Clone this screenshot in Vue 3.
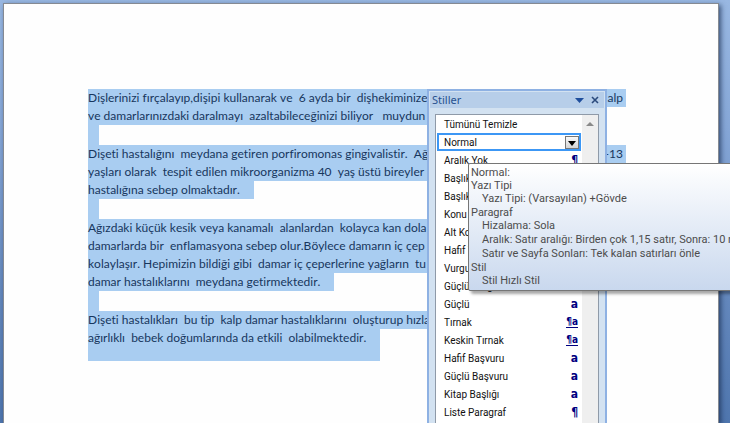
<template>
  <main class="desk">
    <article class="paper">
      <p v-for="(lines, i) in paragraphs" :key="i" class="paragraph">
        <span v-for="line in lines" :key="line.text" class="line" :class="line.kind">
          <span>{{ line.text }}</span>
          <span v-if="line.tail">{{ line.tail }}</span>
        </span>
      </p>
      <div class="watermark">www.dijitalders.com</div>
    </article>

    <aside class="pane" aria-labelledby="pane-title">
      <header class="pane-head">
        <h2 id="pane-title" class="pane-title">Stiller</h2>
        <button type="button" class="head-btn" aria-label="Seçenekler">
          <svg width="9" height="5" viewBox="0 0 9 5"><path d="M0 0h9L4.5 5z" fill="#1f4e9c" /></svg>
        </button>
        <button type="button" class="head-btn" aria-label="Kapat">
          <svg width="8" height="8" viewBox="0 0 8 8"><path d="M1 1l6 6M7 1L1 7" stroke="#2b4a7c" stroke-width="1.6" /></svg>
        </button>
      </header>
      <div class="list-box">
        <ul class="list">
          <li v-for="item in styles" :key="item.name" class="row" :class="{ active: item.name === current }">
            <button type="button" class="row-name" @click="current = item.name">{{ item.name }}</button>
            <button v-if="item.name === current" type="button" class="row-drop" aria-label="Menü">
              <svg width="8" height="5" viewBox="0 0 8 5"><path d="M0 0h8L4 5z" fill="#000" /></svg>
            </button>
            <span v-else class="mark" :class="{ linked: item.mark === '¶a' }">{{ item.mark }}</span>
          </li>
        </ul>
        <div class="scroll">
          <button type="button" class="scroll-up" aria-label="Yukarı">
            <svg width="8" height="4" viewBox="0 0 8 4"><path d="M0 4L4 0L8 4z" fill="#8a8a8a" /></svg>
          </button>
        </div>
      </div>
    </aside>

    <div class="tip" role="tooltip">
      <dl v-for="group in tip" :key="group.title" class="tip-group">
        <dt>{{ group.title }}</dt>
        <dd v-for="row in group.rows" :key="row">{{ row }}</dd>
      </dl>
    </div>
  </main>
</template>

<script setup>
  import { ref } from 'vue'

  // selected style in the pane
  const current = ref('Normal')

  // kind: full = comes out on the right of the pane, under = ends behind it,
  // last = end of the selection
  const paragraphs = [
    [
      { text: 'Dişlerinizi fırçalayıp,dişipi kullanarak ve  6 ayda bir  dişhekiminize', tail: 'alp', kind: 'full' },
      { text: 've damarlarınızdaki daralmayı  azaltabileceğinizi biliyor   muydun', kind: 'under' }
    ],
    [
      { text: 'Dişeti hastalığını  meydana getiren porfiromonas gingivalistir.  Ağ', tail: '-13', kind: 'full' },
      { text: 'yaşları olarak  tespit edilen mikroorganizma 40  yaş üstü bireyler', kind: 'under' },
      { text: 'hastalığına sebep olmaktadır.', kind: '' }
    ],
    [
      { text: 'Ağızdaki küçük kesik veya kanamalı  alanlardan  kolayca kan dola', kind: 'under' },
      { text: 'damarlarda bir  enflamasyona sebep olur.Böylece damarın iç çep', kind: 'under' },
      { text: 'kolaylaşır. Hepimizin bildiği gibi  damar iç çeperlerine yağların  tu', kind: 'under' },
      { text: 'damar hastalıklarını  meydana getirmektedir.', kind: '' }
    ],
    [
      { text: 'Dişeti hastalıkları  bu tip  kalp damar hastalıklarını  oluşturup hızla', kind: 'under' },
      { text: 'ağırlıklı  bebek doğumlarında da etkili  olabilmektedir.', kind: 'last' }
    ]
  ]

  const styles = [
    { name: 'Tümünü Temizle', mark: '' },
    { name: 'Normal', mark: '¶' },
    { name: 'Aralık Yok', mark: '¶' },
    { name: 'Başlık 1', mark: '¶a' },
    { name: 'Başlık 2', mark: '¶a' },
    { name: 'Konu Başlığı', mark: '¶a' },
    { name: 'Alt Konu Başlığı', mark: '¶a' },
    { name: 'Hafif Vurgulama', mark: 'a' },
    { name: 'Vurgu', mark: 'a' },
    { name: 'Güçlü Vurgulama', mark: 'a' },
    { name: 'Güçlü', mark: 'a' },
    { name: 'Tırnak', mark: '¶a' },
    { name: 'Keskin Tırnak', mark: '¶a' },
    { name: 'Hafif Başvuru', mark: 'a' },
    { name: 'Güçlü Başvuru', mark: 'a' },
    { name: 'Kitap Başlığı', mark: 'a' },
    { name: 'Liste Paragraf', mark: '¶' }
  ]

  const tip = [
    { title: 'Normal:', rows: [] },
    { title: 'Yazı Tipi', rows: ['Yazı Tipi: (Varsayılan) +Gövde'] },
    {
      title: 'Paragraf',
      rows: [
        'Hizalama: Sola',
        'Aralık: Satır aralığı: Birden çok 1,15 satır, Sonra: 10 n',
        'Satır ve Sayfa Sonları: Tek kalan satırları önle'
      ]
    },
    { title: 'Stil', rows: ['Stil Hızlı Stil'] }
  ]
</script>

<style>
  body {
    margin: 0;
  }
</style>

<style scoped>
  .desk {
    position: relative;
    display: flex;
    box-sizing: border-box;
    height: 100vh;
    padding: 3px 11px 0 3px;
    overflow: hidden;
    background: linear-gradient(#99b8e2, #86a7d7 30%, #6488bd 70%, #4f76ae);
  }

  .paper {
    position: relative;
    flex: 1;
    padding: 85px 0 0 84px;
    border: 1px solid #858a92;
    border-bottom: 0;
    background: #fefefe;
    box-shadow: 2px 2px 5px rgba(20, 40, 75, 0.7);
    font: 12px/18px Lato, sans-serif;
    font-kerning: none;
    font-variant-ligatures: none;
    color: #17365d;
    white-space: pre;
  }

  .paragraph {
    display: flex;
    flex-direction: column;
    align-items: flex-start;
    margin: 0;
  }
  /* selected empty line between paragraphs */
  .paragraph:not(:nth-last-child(2))::after {
    content: '';
    width: 11px;
    height: 20px;
    background: #a9cdf1;
  }

  .line {
    display: flex;
    justify-content: space-between;
    padding-right: 14px;
    background: #a9cdf1;
  }
  .full {
    width: 535px;
    padding-right: 3px;
  }
  .under {
    min-width: 340px;
    padding-right: 0;
  }
  .last {
    padding-bottom: 14px;
  }

  .watermark {
    position: absolute;
    top: 295px;
    left: 188px;
    font: bold 25px/24px "DejaVu Sans", sans-serif;
    color: rgba(0, 0, 0, 0.012);
  }

  .pane {
    position: absolute;
    top: 89px;
    bottom: 0;
    left: 427px;
    display: flex;
    flex-direction: column;
    box-sizing: border-box;
    width: 180px;
    padding: 1px 6px 0;
    border: 2px solid #8eb1e3;
    border-bottom: 0;
    background: #d3e2f1;
  }

  .pane-head {
    display: flex;
    align-items: center;
    height: 16px;
    margin: 0 -5px 6px;
    padding: 0 1px 0 2px;
    background: #b7cee9;
  }
  .pane-title {
    flex: 1;
    margin: 0;
    font: 11px/16px "Noto Sans", sans-serif;
    color: #27518f;
  }
  .head-btn {
    display: flex;
    align-items: center;
    justify-content: center;
    width: 16px;
    height: 16px;
    padding: 0;
    border: 0;
    background: none;
  }

  .list-box {
    display: flex;
    flex: 1;
    min-height: 0;
    overflow: hidden;
    border: 1px solid #8f9aa8;
    border-bottom: 0;
    background: #fff;
  }
  .list {
    flex: 1;
    margin: 0;
    padding: 0 1px;
    list-style: none;
  }
  .row {
    display: flex;
    align-items: center;
    box-sizing: border-box;
    height: 18px;
    padding: 0 3px 0 7px;
  }
  .active {
    padding: 0 0 0 5px;
    border: 2px solid #3c97f5;
  }
  .row-name {
    flex: 1;
    padding: 1px 0 0;
    border: 0;
    background: none;
    font: 10px/15px Roboto, sans-serif;
    color: #111;
    text-align: left;
    white-space: nowrap;
  }
  .row-drop {
    display: flex;
    align-items: flex-end;
    justify-content: center;
    box-sizing: border-box;
    width: 14px;
    height: 13px;
    padding: 0 0 2px;
    border: 1px solid #777;
    background: linear-gradient(#fafafa, #d4d4d4);
  }
  .mark {
    font: bold 12px/12px "DejaVu Sans Condensed", "DejaVu Sans", sans-serif;
    color: #000080;
  }
  .linked {
    border-bottom: 1px solid #000080;
    font-size: 10px;
    line-height: 10px;
  }

  .scroll {
    width: 16px;
    background: #efefef;
  }
  .scroll-up {
    display: flex;
    align-items: center;
    justify-content: center;
    width: 16px;
    height: 17px;
    padding: 0;
    border: 0;
    background: none;
  }

  .tip {
    position: absolute;
    top: 163px;
    right: -4px;
    left: 468px;
    padding: 2px;
    border: 1px solid #767676;
    border-radius: 2px;
    background: linear-gradient(#fff, #c9d8ee);
    box-shadow: 3px 3px 3px rgba(0, 0, 0, 0.35);
    font: 11px/13px Roboto, sans-serif;
    color: #4c4c4c;
    white-space: pre;
  }
  .tip-group {
    margin: 0;
  }
  .tip-group dd {
    margin-left: 11px;
    line-height: 14px;
  }
</style>
